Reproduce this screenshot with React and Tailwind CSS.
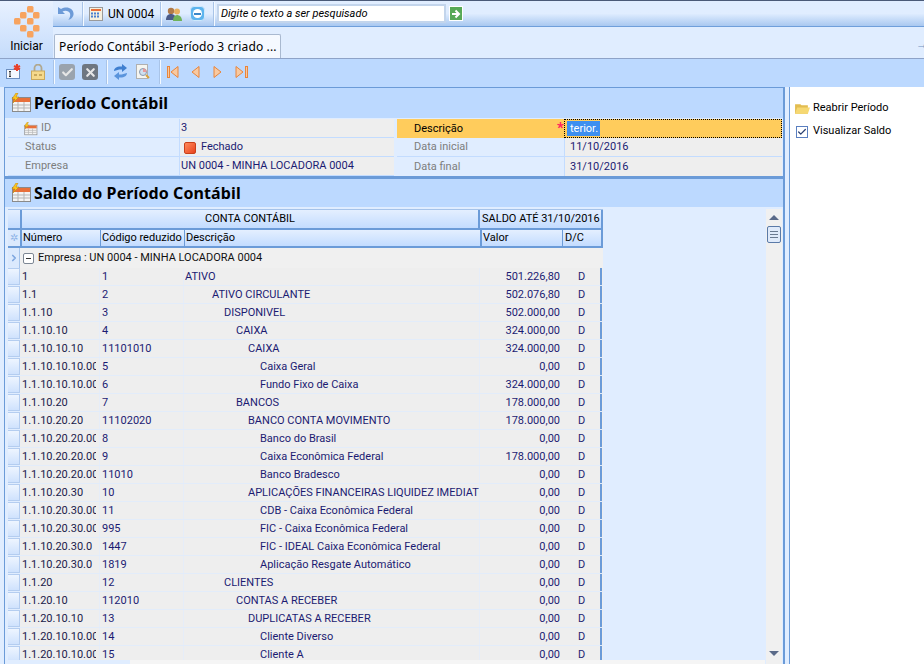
import { Check, X, ChevronLeft } from 'lucide-react';

const rows = [
  ['1', '1', 'ATIVO', 186, '501.226,80'],
  ['1.1', '2', 'ATIVO CIRCULANTE', 213, '502.076,80'],
  ['1.1.10', '3', 'DISPONIVEL', 225, '502.000,00'],
  ['1.1.10.10', '4', 'CAIXA', 237, '324.000,00'],
  ['1.1.10.10.10', '11101010', 'CAIXA', 249, '324.000,00'],
  ['1.1.10.10.10.0001', '5', 'Caixa Geral', 261, '0,00'],
  ['1.1.10.10.10.0002', '6', 'Fundo Fixo de Caixa', 261, '324.000,00'],
  ['1.1.10.20', '7', 'BANCOS', 237, '178.000,00'],
  ['1.1.10.20.20', '11102020', 'BANCO CONTA MOVIMENTO', 249, '178.000,00'],
  ['1.1.10.20.20.0001', '8', 'Banco do Brasil', 261, '0,00'],
  ['1.1.10.20.20.0002', '9', 'Caixa Econômica Federal', 261, '178.000,00'],
  ['1.1.10.20.20.0003', '11010', 'Banco Bradesco', 261, '0,00'],
  ['1.1.10.20.30', '10', 'APLICAÇÕES FINANCEIRAS LIQUIDEZ IMEDIAT', 249, '0,00'],
  ['1.1.10.20.30.0001', '11', 'CDB - Caixa Econômica Federal', 261, '0,00'],
  ['1.1.10.20.30.0002', '995', 'FIC - Caixa Econômica Federal', 261, '0,00'],
  ['1.1.10.20.30.0', '1447', 'FIC - IDEAL Caixa Econômica Federal', 261, '0,00'],
  ['1.1.10.20.30.0', '1819', 'Aplicação Resgate Automático', 261, '0,00'],
  ['1.1.20', '12', 'CLIENTES', 225, '0,00'],
  ['1.1.20.10', '112010', 'CONTAS A RECEBER', 237, '0,00'],
  ['1.1.20.10.10', '13', 'DUPLICATAS A RECEBER', 249, '0,00'],
  ['1.1.20.10.10.0001', '14', 'Cliente Diverso', 261, '0,00'],
  ['1.1.20.10.10.0002', '15', 'Cliente A', 261, '0,00'],
];

function Logo() {
  const cells = [[16, 4], [9, 10], [22, 10], [3, 16], [16, 16], [9, 23], [22, 23], [16, 29]];
  return (
    <svg width="26" height="33" viewBox="0 0 26 33">
      {cells.map(([x, y], i) => (
        <rect key={i} x={x - 3} y={y - 3} width="6.5" height="6.5" rx="1.5" fill="#f7a35f" />
      ))}
    </svg>
  );
}

function TableIcon({ className = '' }) {
  return (
    <svg width="22" height="20" viewBox="0 0 22 20" className={className}>
      <rect x="2.5" y="4.5" width="18" height="14" fill="#f4f4f4" stroke="#8a8a8a" />
      <rect x="3" y="5" width="17" height="4" fill="#e8703a" />
      <path d="M3 12h17M3 15h17M8 9v9M14 9v9" stroke="#b5b5b5" />
      <path d="M6 0 2 6h3L3 10l6-6H6l2-4z" fill="#ffc81e" stroke="#b07c10" strokeWidth="0.5" />
    </svg>
  );
}

function Sep() {
  return <div className="w-px h-[24px] bg-[#f5faff] border-l border-[#a9c4e8] box-content" />;
}

function Field({ label, value, icon, children, pl = 'pl-[17px]' }) {
  return (
    <div className="flex h-[19px] border-b border-[#c3dcff]">
      <div className={`w-[171px] shrink-0 flex items-center gap-[3px] pt-px text-[#7d7d7d] bg-[#e0edff] ${pl}`}>
        {icon}
        {label}
      </div>
      <div className="flex-1 flex items-center gap-[5px] pt-px bg-[#eeeeee] border-l border-[#c3dcff] pl-px text-[#1b1b72]">
        {children}
        {value}
      </div>
    </div>
  );
}

function PanelHeader({ title, h = 'h-[28px]' }) {
  return (
    <div className={`${h} shrink-0 flex items-center gap-[2px] pl-[5px] bg-[#bcd9ff]`}>
      <TableIcon />
      <span className="text-[16px] font-bold text-black tracking-[0.1px]" style={{ fontFamily: '"Noto Sans", sans-serif' }}>{title}</span>
    </div>
  );
}

function Row({ r }) {
  return (
    <div className="flex h-[18px] shrink-0">
      <div className="w-[12px] shrink-0 bg-gradient-to-b from-[#eef5ff] to-[#cfe2fd] border-y border-r border-[#b4cdf0] mb-px" />
      <div className="flex flex-1 bg-[#eeeeee] border-b border-[#e2ecfa] items-stretch leading-[17px]">
        <div className="w-[76px] mr-[3px] shrink-0 overflow-hidden whitespace-nowrap pl-[2px] text-[#1a1a4a]">{r[0]}</div>
        <div className="w-[84px] shrink-0 pl-[2px] border-l border-[#e6edf8] text-[#1b1b72]">{r[1]}</div>
        <div className="w-[296px] shrink-0 whitespace-nowrap overflow-hidden border-l border-[#e6edf8] text-[#1b1b72]" style={{ paddingLeft: r[3] - 185 }}>{r[2]}</div>
        <div className="w-[81px] shrink-0 text-right border-l border-[#e6edf8] text-[#1b1b72]">{r[4]}</div>
        <div className="w-[40px] shrink-0 text-center pl-[3px] text-[#1b1b72]">D</div>
        <div className="w-[2px] h-[17px] bg-[#6b9bd8]" />
      </div>
    </div>
  );
}

const headCell = 'bg-gradient-to-b from-[#e4efff] to-[#c3dcff] leading-[16px]';

export default function App() {
  return (
    <div
      className="w-[924px] h-[664px] overflow-hidden flex flex-col text-[11px] text-black bg-[#e0edff]"
      style={{ fontFamily: 'Roboto, Tahoma, sans-serif' }}
    >
      {/* Faixa superior */}
      <div className="h-[59px] shrink-0 flex border-t border-[#4a5a78] border-b border-b-[#8ea3c8]">
        <div className="w-[53px] shrink-0 flex flex-col items-center bg-gradient-to-b from-[#e8f1ff] to-[#c5dcfb]">
          <div className="mt-[4px]"><Logo /></div>
          <span className="-mt-[1px] text-[12px]">Iniciar</span>
        </div>
        <div className="flex-1 flex flex-col">
          <div className="h-[26px] shrink-0 flex items-center gap-[6px] pl-[4px] bg-gradient-to-b from-[#e0edff] via-[#e0edff] to-[#a9c8f0] border-b border-[#6f9fdb]">
            <svg width="18" height="18" viewBox="0 0 18 18" className="mr-px">
              <path d="M1 2v7h7L5.500 6.500C8 5 12 5.500 13 8.500c.7 2.200-.2 4.500-1.700 6.500 3.500-1 5.700-3.800 5.200-7C16 3.500 10 .5 4 4z" fill="#6d9bd8" />
            </svg>
            <Sep />
            <svg width="14" height="14" viewBox="0 0 14 14" className="-ml-[1px]">
              <rect x="0.5" y="0.5" width="13" height="13" fill="#f5f0e0" stroke="#9a9a9a" />
              <path d="M2 3h10" stroke="#e8703a" strokeWidth="2" />
              <path d="M2 6.500h2m1 0h2m1 0h2M2 9.500h2m1 0h2m1 0h2" stroke="#4a7fd0" strokeWidth="2" />
            </svg>
            <span className="text-[12px] w-[44px] -ml-[1px] whitespace-nowrap">UN 0004</span>
            <div className="ml-[2px]"><Sep /></div>
            <svg width="16" height="16" viewBox="0 0 16 16" className="-ml-[2px]">
              <circle cx="5" cy="5" r="3.200" fill="#b07a4a" />
              <path d="M0 14c0-4 2-6 5-6s5 2 5 6z" fill="#4a5a88" />
              <circle cx="11" cy="5.500" r="3" fill="#e8b060" />
              <path d="M7 15c0-4 1.500-6 4-6s5 2 5 6z" fill="#6fb35a" />
            </svg>
            <div className="w-[15px] h-[15px] ml-[2px] rounded-[4px] bg-[#5db4ee] border border-[#cfe8fb] flex items-center justify-center">
              <div className="w-[9px] h-[9px] rounded-full bg-white flex items-center justify-center"><div className="w-[7px] h-[2px] bg-[#3b87c8]" /></div>
            </div>
            <div className="ml-[2px]"><Sep /></div>
            <div className="w-[229px] h-[19px] -ml-[4px] flex items-center pl-[2px] pt-px bg-white border-2 border-[#c3d5ec] italic whitespace-nowrap">Digite o texto a ser pesquisado</div>
            <div className="w-[14px] h-[15px] -ml-[3px] flex items-center justify-center bg-[#57a957] border border-white">
              <svg width="10" height="10" viewBox="0 0 10 10"><path d="M1 5h6M4.500 1.500 8 5 4.500 8.500" fill="none" stroke="white" strokeWidth="2" /></svg>
            </div>
          </div>
          <div className="flex-1 flex items-end justify-between pl-[1px]">
            <div className="w-[227px] h-[24px] flex items-center pl-[4px] bg-[#f5f9ff] border border-b-0 border-[#a9b9d0] rounded-t-[2px] text-[12px] tracking-[0.12px] whitespace-nowrap" style={{ fontFamily: '"Noto Sans", sans-serif' }}>Período Contábil 3-Período 3 criado ...</div>
            <span className="text-[#6d8fc0] text-[12px] self-center mt-[2px] -mr-[4px]">→</span>
          </div>
        </div>
      </div>

      {/* Barra de ações */}
      <div className="h-[28px] shrink-0 flex items-center pl-[6px] pb-[2px] gap-[6px] bg-[#bcd9ff]">
        <svg width="16" height="16" viewBox="0 0 16 16">
          <rect x="0.5" y="5.500" width="13" height="9" fill="#f5f9ff" stroke="#6d8fc0" />
          <path d="M3 7.500h2M4 7.500v5M3 12.500h2" stroke="#333" />
          <path d="M11 0v7M8 2l6 3M14 2 8 5" stroke="#e8402a" strokeWidth="2" />
        </svg>
        <svg width="16" height="16" viewBox="0 0 16 16" className="ml-[2px]">
          <path d="M4.500 7V4a3.500 3.500 0 0 1 7 0v3" fill="none" stroke="#b0a890" strokeWidth="1.800" />
          <rect x="1.500" y="7" width="13" height="8.500" fill="#f5d98c" stroke="#c9a85c" />
          <path d="M4 10h3v2H4zM9 10h3v2H9z" fill="#c9a85c" />
        </svg>
        <div className="ml-[1px]"><Sep /></div>
        <div className="w-[16px] h-[16px] -ml-[2px] rounded-[3px] bg-[#9aa3ad] flex items-center justify-center"><Check size={13} strokeWidth={4} className="text-[#e6e6e6]" /></div>
        <div className="w-[16px] h-[16px] rounded-[3px] bg-[#6e7680] flex items-center justify-center ml-[1px]"><X size={13} strokeWidth={4} className="text-[#e6e6e6]" /></div>
        <div className="ml-[2px]"><Sep /></div>
        <svg width="15" height="16" viewBox="0 0 15 16" className="-ml-[1px]">
          <path d="M1 7c0-3 3-5 8-4.500V0l5 4-5 4V5.500C6 5.300 4 6 1 7z" fill="#3f7fd0" />
          <path d="M14 9c0 3-3 5-8 4.500V16l-5-4 5-4v2.500c3 .2 5-.5 8-1.500z" fill="#5a94dc" />
        </svg>
        <svg width="16" height="16" viewBox="0 0 16 16" className="ml-[1px]">
          <rect x="1.500" y="0.500" width="11" height="14" fill="#f5f5f0" stroke="#b0b0b0" />
          <circle cx="8" cy="8" r="3.500" fill="#cfe0f0" stroke="#8a9ab0" />
          <path d="M8 8V4.500A3.500 3.500 0 0 1 11.500 8z" fill="#e89a9a" />
          <path d="m11 11 3 3" stroke="#d9a23c" strokeWidth="2" />
        </svg>
        <div className="ml-[2px]"><Sep /></div>
        <svg width="90" height="14" viewBox="0 0 90 14" className="-ml-[1px]">
          <g fill="#f8c9a0" stroke="#e8853c">
            <rect x="1.500" y="1.500" width="2" height="11" />
            <path d="M12 1.500v11L5 7z" />
            <path d="M33 1.500v11L26 7z" />
            <path d="M48 1.500v11L55 7z" />
            <path d="M70 1.500v11L77 7z" />
            <rect x="79.500" y="1.500" width="2" height="11" />
          </g>
        </svg>
      </div>

      <div className="flex-1 flex min-h-0">
        {/* Conteúdo */}
        <div className="w-[785px] shrink-0 pl-[4px] flex flex-col min-h-0">
          <div className="border border-[#6b9bd8] border-r-2 border-b-2 flex flex-col h-[91px] shrink-0">
            <PanelHeader title="Período Contábil" h="h-[30px]" />
            <div className="flex pl-[3px] pr-[1px] pt-px">
              <div className="w-[386px] shrink-0">
                <Field label="ID" value="3" pl="pl-[15px]" icon={<TableIcon className="w-[15px] h-[14px]" />} />
                <Field label="Status" value="Fechado">
                  <div className="w-[12px] h-[12px] ml-[3px] rounded-[2px] bg-gradient-to-br from-[#ff8a5a] to-[#e8401a] border border-[#c9401a]" />
                </Field>
                <Field label="Empresa" value="UN 0004 - MINHA LOCADORA 0004" />
              </div>
              <div className="flex-1 ml-[3px]">
                <div className="flex h-[19px] bg-[#ffcc5c] items-center relative">
                  <div className="w-[167px] pl-[17px] pt-px shrink-0">Descrição</div>
                  <span className="absolute left-[160px] top-[-2px] text-[#ff2060] text-[15px] font-bold">*</span>
                  <div className="flex-1 h-full flex items-center pl-[2px] border border-dotted border-black">
                    <span className="w-[33px] bg-[#3d8ff0] text-white leading-[15px] pl-[3px] overflow-hidden">terior.</span>
                  </div>
                </div>
                <div className="flex h-[19px] border-b border-[#c3dcff] items-center">
                  <div className="w-[167px] pl-[17px] pt-px text-[#7d7d7d] shrink-0">Data inicial</div>
                  <div className="flex-1 h-full flex items-center bg-[#eeeeee] pl-[5px] pt-px border-l border-[#c3dcff] text-[#1b1b72]">11/10/2016</div>
                </div>
                <div className="flex h-[19px] items-center">
                  <div className="w-[167px] pl-[17px] pt-px text-[#7d7d7d] shrink-0">Data final</div>
                  <div className="flex-1 h-full flex items-center bg-[#eeeeee] pl-[5px] pt-px border-l border-[#c3dcff] text-[#1b1b72]">31/10/2016</div>
                </div>
              </div>
            </div>
          </div>

          <div className="flex-1 min-h-0 border border-[#6b9bd8] border-r-2 border-b-0 flex flex-col">
            <PanelHeader title="Saldo do Período Contábil" />
            <div className="flex-1 min-h-0 flex pl-[3px] pt-[2px] pr-[1px]">
              <div className="flex-1 min-h-0 overflow-hidden flex flex-col">
                <div className="w-[595px] flex flex-col flex-1 min-h-0 overflow-hidden">
                  <div className="flex h-[19px] shrink-0 border-t border-[#a5c3ea]">
                    <div className="w-[12px] shrink-0 bg-gradient-to-b from-[#e4efff] to-[#c3dcff]" />
                    <div className="w-[460px] shrink-0 text-center leading-[18px] bg-gradient-to-b from-[#e4efff] to-[#c3dcff] border-l-2 border-r-2 border-[#6b9bd8]">CONTA CONTÁBIL</div>
                    <div className="flex-1 leading-[18px] pl-[2px] bg-gradient-to-b from-[#e4efff] to-[#c3dcff] border-r-2 border-[#6b9bd8] whitespace-nowrap">SALDO ATÉ 31/10/2016</div>
                  </div>
                  <div className="flex h-[20px] shrink-0 border-t-2 border-b-2 border-[#6b9bd8] items-stretch">
                    <div className="w-[12px] shrink-0 text-center text-[#8fb4e8] leading-[16px] text-[10px] bg-[#dbe9fd]">✲</div>
                    <div className={`w-[80px] shrink-0 pl-[1px] border-l-2 border-[#6b9bd8] ${headCell}`}>Número</div>
                    <div className={`w-[84px] shrink-0 pl-[1px] border-l border-[#6b9bd8] whitespace-nowrap ${headCell}`}>Código reduzido</div>
                    <div className={`w-[296px] shrink-0 pl-[1px] border-l border-[#6b9bd8] ${headCell}`}>Descrição</div>
                    <div className={`w-[82px] shrink-0 pl-[1px] border-l-2 border-[#6b9bd8] ${headCell}`}>Valor</div>
                    <div className={`flex-1 pl-[2px] border-l border-r-2 border-[#6b9bd8] ${headCell}`}>D/C</div>
                  </div>
                  <div className="flex h-[20px] shrink-0">
                    <div className="w-[12px] shrink-0 flex items-center justify-center bg-[#dbe9fd] border-r border-[#a5c3ea]">
                      <ChevronLeft size={10} strokeWidth={4} className="rotate-180 text-[#7ea6df]" />
                    </div>
                    <div className="flex-1 flex items-center gap-[4px] pl-[3px] bg-[#f0f0f0] text-[#111]">
                      <div className="w-[11px] h-[11px] rounded-[2px] border border-[#7d8794] bg-white flex items-center justify-center"><div className="w-[5px] h-px bg-[#333]" /></div>
                      Empresa : UN 0004 - MINHA LOCADORA 0004
                    </div>
                  </div>
                  <div className="flex-1 min-h-0 overflow-hidden">
                    {rows.map((r, i) => <Row key={i} r={r} />)}
                  </div>
                </div>
                <div className="h-[4px] shrink-0 bg-[#f5f5f5] w-[757px]">
                  <div className="w-[122px] h-full bg-[#e0edff]" />
                </div>
              </div>
              <div className="w-[16px] shrink-0 flex flex-col items-center bg-[#f0f0f0] pt-[6px]">
                <div className="w-0 h-0 border-x-[5px] border-x-transparent border-b-[5px] border-b-[#5a6a88]" />
                <div className="w-[14px] h-[17px] mt-[6px] rounded-[2px] border border-[#5a7aa8] bg-[#dfeafa] flex items-center justify-center">
                  <div className="w-[8px] h-[7px] border-y border-[#6a7a90] flex items-center"><div className="w-full h-px bg-[#6a7a90]" /></div>
                </div>
                <div className="flex-1" />
                <div className="w-0 h-0 mb-[8px] border-x-[5px] border-x-transparent border-t-[5px] border-t-[#5a6a88]" />
              </div>
            </div>
          </div>
        </div>

        {/* Painel lateral */}
        <div className="flex-1 ml-[4px] bg-white border-l border-[#6b9bd8] pt-[14px] pl-[4px] flex flex-col gap-[8px]">
          <div className="flex items-center gap-[3px] h-[15px]">
            <svg width="16" height="13" viewBox="0 0 15 12"><path d="M1 2h5l1 1h6v8H1z" fill="#e3bd50" /><path d="M1 11 3 5h12l-2 6z" fill="#f6d872" /></svg>
            Reabrir Período
          </div>
          <div className="flex items-center gap-[5px] h-[15px]">
            <div className="w-[12px] h-[12px] ml-[2px] border border-[#5a7fc0] bg-white flex items-center justify-center">
              <Check size={10} strokeWidth={3} className="text-[#2a3f70]" />
            </div>
            Visualizar Saldo
          </div>
        </div>
      </div>
    </div>
  );
}
